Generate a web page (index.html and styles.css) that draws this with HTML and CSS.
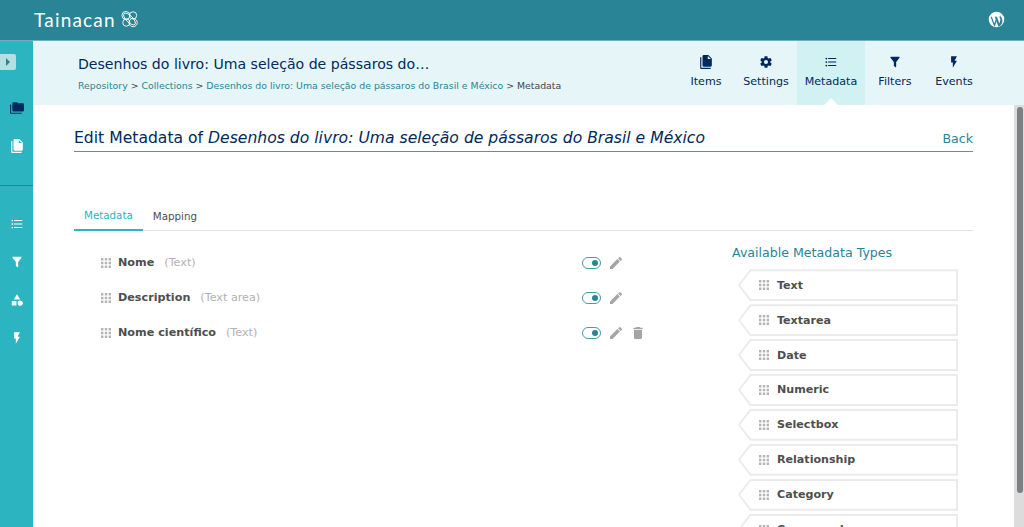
FILE: index.html
```html
<!DOCTYPE html>
<html lang="en">
<head>
<meta charset="utf-8">
<title>Tainacan</title>
<link rel="stylesheet" href="styles.css">
</head>
<body>
<svg class="sprite" aria-hidden="true">
  <symbol id="i-folders" viewBox="0 0 24 24"><path d="M22,4H14L12,2H6A2,2 0 0,0 4,4V16A2,2 0 0,0 6,18H22A2,2 0 0,0 24,16V6A2,2 0 0,0 22,4M2,6H0V20A2,2 0 0,0 2,22H20V20H2V6Z"/></symbol>
  <symbol id="i-files" viewBox="0 0 24 24"><path d="M15,7H20.5L15,1.500V7M8,0H16L22,6V18A2,2 0 0,1 20,20H8C6.89,20 6,19.1 6,18V2A2,2 0 0,1 8,0M4,4V22H20V24H4A2,2 0 0,1 2,22V4H4Z"/></symbol>
  <symbol id="i-cog" viewBox="0 0 24 24"><path d="M12,15.5A3.5,3.5 0 0,1 8.5,12A3.5,3.5 0 0,1 12,8.5A3.5,3.5 0 0,1 15.5,12A3.5,3.5 0 0,1 12,15.5M19.43,12.97C19.47,12.65 19.5,12.33 19.5,12C19.5,11.67 19.47,11.34 19.43,11L21.54,9.37C21.73,9.22 21.78,8.95 21.66,8.73L19.66,5.27C19.54,5.05 19.27,4.96 19.05,5.05L16.56,6.05C16.04,5.66 15.5,5.32 14.87,5.07L14.5,2.42C14.46,2.18 14.25,2 14,2H10C9.75,2 9.54,2.18 9.5,2.42L9.13,5.07C8.5,5.32 7.96,5.66 7.44,6.05L4.95,5.05C4.73,4.96 4.46,5.05 4.34,5.27L2.34,8.73C2.21,8.95 2.27,9.22 2.46,9.37L4.57,11C4.53,11.34 4.5,11.67 4.5,12C4.5,12.33 4.53,12.65 4.57,12.97L2.46,14.63C2.27,14.78 2.21,15.05 2.34,15.27L4.34,18.73C4.46,18.95 4.73,19.03 4.95,18.95L7.44,17.94C7.96,18.34 8.5,18.68 9.13,18.93L9.5,21.58C9.54,21.82 9.75,22 10,22H14C14.25,22 14.46,21.82 14.5,21.58L14.87,18.93C15.5,18.67 16.04,18.34 16.56,17.94L19.05,18.95C19.27,19.03 19.54,18.95 19.66,18.73L21.66,15.27C21.78,15.05 21.73,14.78 21.54,14.63L19.43,12.97Z"/></symbol>
  <symbol id="i-list" viewBox="0 0 24 24"><path d="M7,5H21V7H7V5M7,13V11H21V13H7M4,4.5A1.5,1.5 0 0,1 5.5,6A1.5,1.5 0 0,1 4,7.5A1.5,1.5 0 0,1 2.5,6A1.5,1.5 0 0,1 4,4.5M4,10.5A1.5,1.5 0 0,1 5.5,12A1.5,1.5 0 0,1 4,13.5A1.5,1.5 0 0,1 2.5,12A1.5,1.5 0 0,1 4,10.5M7,19V17H21V19H7M4,16.5A1.5,1.5 0 0,1 5.5,18A1.5,1.5 0 0,1 4,19.5A1.5,1.5 0 0,1 2.5,18A1.5,1.5 0 0,1 4,16.5Z"/></symbol>
  <symbol id="i-filter" viewBox="0 0 24 24"><path d="M14,12V19.88C14.04,20.18 13.94,20.5 13.71,20.71C13.32,21.1 12.69,21.1 12.3,20.71L10.29,18.7C10.06,18.47 9.96,18.16 10,17.87V12H9.97L4.21,4.62C3.87,4.19 3.95,3.56 4.38,3.22C4.57,3.08 4.78,3 5,3H19C19.22,3 19.43,3.08 19.62,3.22C20.05,3.56 20.13,4.19 19.79,4.62L14.03,12H14Z"/></symbol>
  <symbol id="i-flash" viewBox="0 0 24 24"><path d="M7,2V13H10V22L17,10H13L17,2H7Z"/></symbol>
  <symbol id="i-shape" viewBox="0 0 24 24"><path d="M11,13.5V21.5H3V13.5H11M12,2L17.5,11H6.5L12,2M17.5,13C20,13 22,15 22,17.5C22,20 20,22 17.5,22C15,22 13,20 13,17.5C13,15 15,13 17.5,13Z"/></symbol>
  <symbol id="i-pencil" viewBox="0 0 24 24"><path d="M20.71,7.04C21.1,6.65 21.1,6 20.71,5.63L18.37,3.29C18,2.9 17.35,2.9 16.96,3.29L15.12,5.12L18.87,8.87M3,17.25V21H6.75L17.81,9.93L14.06,6.18L3,17.25Z"/></symbol>
  <symbol id="i-trash" viewBox="0 0 24 24"><path d="M19,4H15.5L14.5,3H9.5L8.5,4H5V6H19M6,19A2,2 0 0,0 8,21H16A2,2 0 0,0 18,19V7H6V19Z"/></symbol>
  <symbol id="i-grip" viewBox="0 0 10 10"><path d="M0 0h2.400v2.400H0zM3.800 0h2.400v2.400H3.800zM7.600 0H10v2.400H7.600zM0 3.800h2.400v2.400H0zM3.800 3.800h2.400v2.400H3.800zM7.600 3.800H10v2.400H7.600zM0 7.600h2.400V10H0zM3.800 7.600h2.400V10H3.800zM7.600 7.600H10V10H7.600z"/></symbol>
</svg>

<header class="topbar">
  <div class="logo">
    <span class="logo-text">Tainacan</span>
    <svg class="logo-knot" viewBox="0 0 20 20" fill="none" stroke="currentColor" stroke-width="1">
      <circle cx="6" cy="6" r="4.4"/><circle cx="14" cy="6" r="4"/><circle cx="6.5" cy="14" r="4"/><circle cx="14" cy="14" r="4.6"/>
      <ellipse cx="10" cy="10" rx="8.5" ry="3.6" transform="rotate(45 10 10)"/>
    </svg>
  </div>
  <svg class="wp" viewBox="0 0 24 24"><path fill-rule="evenodd" d="M12 1a11 11 0 1 0 0 22 11 11 0 0 0 0-22ZM3.6 8h2.7l-.8.2 3.4 9.6 2-5.9-1.2-3.7-1-.2h5l-1.1.2 3.4 9.6 1.2-4c.6-2 .2-3-.7-4.4-.6-1-.4-2.2.7-2.5 1.4 1 4 5 3 8.5-.7 3.4-2.8 5.6-5.3 7l-3-8-2.6 8.8C9 20.300 8.500 20.200 8 20L3.600 8Z"/></svg>
</header>

<div class="shell">
  <aside class="sidebar">
    <button class="collapse" type="button" aria-label="Expand"><span class="caret"></span></button>
    <div class="side-group">
      <svg class="side-icon side-dark"><use href="#i-folders"/></svg>
      <svg class="side-icon"><use href="#i-files"/></svg>
    </div>
    <div class="side-group side-lower">
      <svg class="side-icon"><use href="#i-list"/></svg>
      <svg class="side-icon"><use href="#i-filter"/></svg>
      <svg class="side-icon"><use href="#i-shape"/></svg>
      <svg class="side-icon"><use href="#i-flash"/></svg>
    </div>
  </aside>

  <div class="main">
    <section class="subhead">
      <div class="crumbs">
        <h1 class="coll-title">Desenhos do livro: Uma seleção de pássaros do…</h1>
        <nav class="breadcrumb">
          <a>Repository</a> &gt; <a>Collections</a> &gt; <a>Desenhos do livro: Uma seleção de pássaros do Brasil e México</a> &gt; <span>Metadata</span>
        </nav>
      </div>
      <ul class="pagetabs">
        <li class="pagetab tab-items"><svg><use href="#i-files"/></svg><span>Items</span></li>
        <li class="pagetab tab-settings"><svg><use href="#i-cog"/></svg><span>Settings</span></li>
        <li class="pagetab tab-metadata is-active"><svg><use href="#i-list"/></svg><span>Metadata</span></li>
        <li class="pagetab tab-filters"><svg><use href="#i-filter"/></svg><span>Filters</span></li>
        <li class="pagetab tab-events"><svg><use href="#i-flash"/></svg><span>Events</span></li>
      </ul>
    </section>

    <div class="scroller">
      <main class="content">
        <div class="page-head">
          <h2 class="page-title">Edit Metadata of <em>Desenhos do livro: Uma seleção de pássaros do Brasil e México</em></h2>
          <a class="back">Back</a>
        </div>

        <div class="tabs">
          <a class="tab is-active">Metadata</a>
          <a class="tab">Mapping</a>
        </div>

        <div class="columns">
          <div class="meta-list">
            <div class="meta-row">
              <svg class="grip"><use href="#i-grip"/></svg>
              <span class="meta-name">Nome</span><span class="meta-type">(Text)</span>
              <div class="meta-actions"><span class="switch"></span><svg class="act"><use href="#i-pencil"/></svg></div>
            </div>
            <div class="meta-row">
              <svg class="grip"><use href="#i-grip"/></svg>
              <span class="meta-name">Description</span><span class="meta-type">(Text area)</span>
              <div class="meta-actions"><span class="switch"></span><svg class="act"><use href="#i-pencil"/></svg></div>
            </div>
            <div class="meta-row">
              <svg class="grip"><use href="#i-grip"/></svg>
              <span class="meta-name">Nome científico</span><span class="meta-type">(Text)</span>
              <div class="meta-actions"><span class="switch"></span><svg class="act"><use href="#i-pencil"/></svg><svg class="act"><use href="#i-trash"/></svg></div>
            </div>
          </div>

          <div class="types">
            <h3 class="types-title">Available Metadata Types</h3>
            <div class="type-item"><svg class="grip"><use href="#i-grip"/></svg><span>Text</span></div>
            <div class="type-item"><svg class="grip"><use href="#i-grip"/></svg><span>Textarea</span></div>
            <div class="type-item"><svg class="grip"><use href="#i-grip"/></svg><span>Date</span></div>
            <div class="type-item"><svg class="grip"><use href="#i-grip"/></svg><span>Numeric</span></div>
            <div class="type-item"><svg class="grip"><use href="#i-grip"/></svg><span>Selectbox</span></div>
            <div class="type-item"><svg class="grip"><use href="#i-grip"/></svg><span>Relationship</span></div>
            <div class="type-item"><svg class="grip"><use href="#i-grip"/></svg><span>Category</span></div>
            <div class="type-item"><svg class="grip"><use href="#i-grip"/></svg><span>Compound</span></div>
          </div>
        </div>
      </main>
      <div class="scrollbar"><div class="scroll-thumb"></div></div>
    </div>
  </div>
</div>
</body>
</html>
```
FILE: styles.css
```css
* { box-sizing: border-box; }
html, body { height: 100%; }
body {
  margin: 0;
  overflow: hidden;
  display: flex;
  flex-direction: column;
  font-family: "DejaVu Sans", sans-serif;
  color: #4e4e4e;
  background: #fff;
}
.sprite { display: none; }
svg { fill: currentColor; display: block; }

.topbar {
  flex: 0 0 41px;
  display: flex;
  align-items: center;
  justify-content: space-between;
  padding: 0 19px 2px 34px;
  background: #298596;
  border-bottom: 1px solid #6fb0bc;
  color: #fff;
}
.logo { display: flex; align-items: center; gap: 4px; }
.logo-text { font: 400 19px/1 "Lato", sans-serif; letter-spacing: 1.2px; }
.logo-knot { width: 19px; height: 18px; fill: none; }
.wp { width: 17px; height: 17px; }

.shell { flex: 1; min-height: 0; display: flex; }

.sidebar {
  flex: 0 0 33px;
  display: flex;
  flex-direction: column;
  padding-top: 13px;
  background: #2cb4c1;
}
.collapse {
  width: 16px;
  height: 16px;
  padding: 0;
  border: 0;
  border-radius: 0 2px 2px 0;
  background: #b6dfe4;
  display: flex;
  align-items: center;
  justify-content: center;
}
.caret {
  width: 0;
  height: 0;
  border-left: 4px solid #298596;
  border-top: 4px solid transparent;
  border-bottom: 4px solid transparent;
}
.side-group {
  display: flex;
  flex-direction: column;
  align-items: center;
  gap: 24px;
  padding-top: 31px;
  padding-bottom: 32px;
  color: #fff;
}
.side-lower {
  border-top: 1px solid #298596;
  padding-top: 31px;
}
.side-icon { width: 14px; height: 14px; }
.side-dark { color: #01295c; }

.main { flex: 1; min-width: 0; display: flex; flex-direction: column; }

.subhead {
  flex: 0 0 64px;
  display: flex;
  justify-content: space-between;
  background: #e6f5f8;
  padding-right: 41px;
}
.crumbs { padding: 14px 0 0 45px; }
.coll-title {
  margin: 0 0 6px;
  font-size: 14.1px;
  font-weight: 400;
  line-height: 18px;
  color: #01295c;
}
.breadcrumb { font-size: 9.35px; line-height: 14px; color: #454545; }
.breadcrumb a { color: #298596; }

.pagetabs { list-style: none; margin: 0; padding: 0; display: flex; }
.pagetab {
  position: relative;
  width: 68px;
  display: flex;
  flex-direction: column;
  align-items: center;
  padding-top: 14px;
  font-size: 11.1px;
  color: #01295c;
}
.pagetab svg { width: 14px; height: 14px; margin-bottom: 6px; }
.pagetab span { line-height: 14px; }
.tab-items { width: 58px; }
.tab-settings { width: 62px; }
.tab-filters { width: 60px; }
.tab-events { width: 58px; }
.is-active.pagetab { background: #d1f1f3; }
.is-active.pagetab::after {
  content: "";
  position: absolute;
  left: 50%;
  bottom: 0;
  margin-left: -7px;
  border-left: 7px solid transparent;
  border-right: 7px solid transparent;
  border-bottom: 7px solid #fff;
}

.scroller { flex: 1; min-height: 0; display: flex; }
.content {
  flex: 1;
  min-width: 0;
  overflow: hidden;
  padding: 0 41px 7px 41px;
}
.scrollbar {
  flex: 0 0 10px;
  padding: 2px 1px 0 3px;
  background: #dcdcdc;
}
.scroll-thumb { height: 386px; background: #7d7f80; border-radius: 3px; }

.page-head {
  display: flex;
  justify-content: space-between;
  align-items: flex-end;
  height: 47px;
  padding-bottom: 3px;
  border-bottom: 1px solid #4b9aa8;
}
.page-title {
  margin: 0;
  font-size: 15.62px;
  font-weight: 400;
  line-height: 20px;
  color: #01295c;
}
.back { font-size: 12.6px; line-height: 16px; color: #298596; margin-bottom: 1px; }

.tabs {
  display: flex;
  margin-top: 53px;
  height: 26px;
  border-bottom: 1px solid #e2e2e2;
  font-size: 10.3px;
}
.tab { padding: 4px 10px 0; line-height: 14px; color: #4e4e4e; }
.tab.is-active {
  padding-top: 3px;
  margin-bottom: -1px;
  color: #2cb4c1;
  border-bottom: 2px solid #2cb4c1;
}

.columns { display: flex; justify-content: space-between; }
.meta-list { flex: 0 0 580px; padding-top: 14px; }
.meta-row {
  display: flex;
  align-items: center;
  height: 35.1px;
  padding-left: 27px;
  font-size: 11.2px;
}
.grip { width: 10px; height: 10px; color: #b4b4b4; flex: none; }
.meta-name { margin-left: 7px; font-weight: 700; }
.meta-type { margin-left: 10px; color: #b1b1b1; }
.meta-actions {
  margin-left: auto;
  display: flex;
  align-items: center;
  width: 72px;
  gap: 6px;
  flex: none;
}
.switch {
  position: relative;
  width: 19px;
  height: 12px;
  margin: 1px 1px 0 0;
  border: 1.5px solid #4b9aa8;
  border-radius: 7px;
  flex: none;
}
.switch::after {
  content: "";
  position: absolute;
  right: 2px;
  top: 1.5px;
  width: 6px;
  height: 6px;
  border-radius: 50%;
  background: #298596;
}
.act { width: 16px; height: 16px; color: #a5a5a5; flex: none; }

.types { flex: 0 0 241px; padding-top: 14.3px; }
.types-title {
  margin: 0 0 8px;
  font-size: 12.6px;
  font-weight: 400;
  line-height: 16px;
  color: #298596;
}
.type-item {
  position: relative;
  isolation: isolate;
  display: flex;
  align-items: center;
  gap: 8px;
  height: 32px;
  margin: 0 15px 2.9px 6px;
  padding-left: 21px;
  font-size: 11.1px;
  font-weight: 700;
}
.type-item::before,
.type-item::after {
  content: "";
  position: absolute;
  z-index: -1;
  clip-path: polygon(12px 0, 100% 0, 100% 100%, 12px 100%, 0 50%);
}
.type-item::before { inset: 0; background: #ebebeb; }
.type-item::after {
  inset: 2px;
  background: #fff;
  clip-path: polygon(11px 0, 100% 0, 100% 100%, 11px 100%, 0 50%);
}
```
